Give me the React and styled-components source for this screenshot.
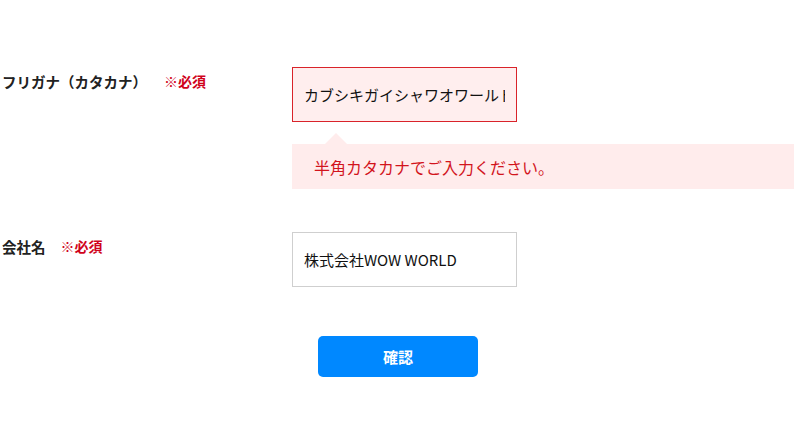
import React from 'react';
import styled, { createGlobalStyle } from 'styled-components';

const GlobalStyle = createGlobalStyle`
  body {
    margin: 0;
    background: #fff;
    font-family: "Noto Sans CJK JP", "Noto Sans", sans-serif;
  }
`;

const Form = styled.form`
  width: 796px;
  padding-top: 67px;
  display: flex;
  flex-direction: column;
`;

const Row = styled.div`
  display: grid;
  grid-template-columns: 292px 1fr;
  margin-bottom: ${(p) => p.gap}px;
`;

const Label = styled.div`
  display: flex;
  align-items: center;
  gap: ${(p) => p.gap}px;
  padding: 4px 0 0 2px;
  height: 20px;
  font-size: 14.5px;
  font-weight: 700;
  color: #222;
`;

const Required = styled.span`
  color: #d0021b;
  font-size: 14px;
  font-weight: 700;
`;

const Field = styled.div`
  display: flex;
  flex-direction: column;
`;

const Input = styled.input`
  box-sizing: border-box;
  width: 225px;
  height: 55px;
  padding: 0 11px;
  font-family: inherit;
  font-size: 15px;
  color: #111;
  background: ${(p) => (p.error ? '#ffeeee' : '#fff')};
  border: 1px solid ${(p) => (p.error ? '#d9232a' : '#cfcfcf')};
  border-radius: 0;
  outline: none;
`;

const Tooltip = styled.div`
  position: relative;
  margin: 22px 2px 0 0;
  height: 45px;
  display: flex;
  align-items: center;
  padding-left: 22px;
  background: #ffecec;
  color: #d2141c;
  font-size: 16px;

  &::before {
    content: '';
    position: absolute;
    left: 33px;
    top: -11px;
    border-left: 11px solid transparent;
    border-right: 11px solid transparent;
    border-bottom: 11px solid #ffecec;
  }
`;

const Actions = styled.div`
  display: flex;
  justify-content: center;
`;

const SubmitButton = styled.button`
  width: 160px;
  height: 41px;
  border: none;
  border-radius: 5px;
  background: #0088ff;
  color: #fff;
  font-family: inherit;
  font-size: 15px;
  font-weight: 700;
`;

export default function App() {
  return (
    <>
      <GlobalStyle />
      <Form onSubmit={(e) => e.preventDefault()}>
        <Row gap={43}>
          <Label gap={17}>
            フリガナ（カタカナ）<Required>※必須</Required>
          </Label>
          <Field>
            <Input error defaultValue="カブシキガイシャワオワールド" />
            <Tooltip>半角カタカナでご入力ください。</Tooltip>
          </Field>
        </Row>
        <Row gap={49}>
          <Label gap={15}>
            会社名<Required>※必須</Required>
          </Label>
          <Field>
            <Input defaultValue="株式会社WOW WORLD" />
          </Field>
        </Row>
        <Actions>
          <SubmitButton type="submit">確認</SubmitButton>
        </Actions>
      </Form>
    </>
  );
}
